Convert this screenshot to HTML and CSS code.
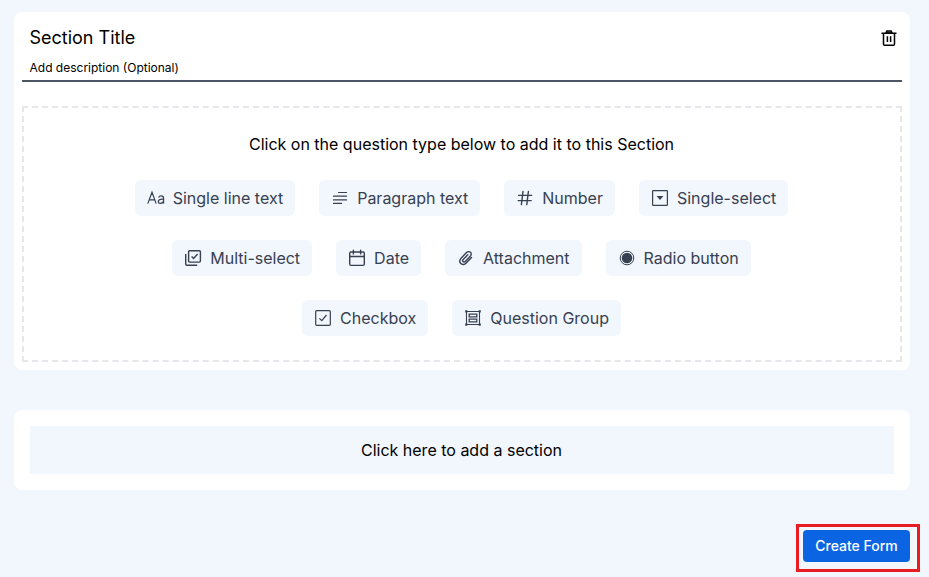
FILE: index.html
```html
<!DOCTYPE html>
<html lang="en">
<head>
  <meta charset="UTF-8">
  <meta name="viewport" content="width=device-width, initial-scale=1.0">
  <title>Create Form</title>
  <link rel="stylesheet" href="styles.css">
</head>
<body>
  <main class="form-builder">
    <section class="card section-card">
      <header class="section-header">
        <div class="section-info">
          <div class="section-title">Section Title</div>
          <div class="section-description">Add description (Optional)</div>
        </div>
        <button class="delete-button" aria-label="Delete section">
          <svg width="18" height="18" viewBox="0 0 18 18" fill="none" stroke="#000" stroke-width="1.5">
            <path d="M6 4l.8-1.9h4.4L12 4z" fill="#aaa"/>
            <path d="M3.5 4.2v11.1q0 1 1 1h9q1 0 1-1V4.2M1.5 4.2h15M7.4 7.3v5.6M10.6 7.3v5.6"/>
          </svg>
        </button>
      </header>

      <div class="question-area">
        <p class="question-hint">Click on the question type below to add it to this Section</p>
        <div class="question-types">
          <button class="type-button">
            <svg class="icon" viewBox="0 0 18 18" fill="none" stroke="currentColor" stroke-width="1.2">
              <path d="M.8 14.6 5 3.2l4.2 11.4M2.3 10.8h5.4M11.6 8.4q.7-1.6 2.6-1.6 2.4 0 2.4 2.5v5.3M16.6 9.9l-2.8.4q-2.5.4-2.5 2.1 0 1.9 2.2 1.9 3.1 0 3.1-3"/>
            </svg>
            Single line text
          </button>
          <button class="type-button">
            <svg class="icon" viewBox="0 0 18 18" fill="none" stroke="currentColor" stroke-width="1.2" stroke-linecap="round">
              <path d="M7.5 3.5h8M2.5 7.2h13M2.5 10.9h13M2.5 14.4h8"/>
            </svg>
            Paragraph text
          </button>
          <button class="type-button">
            <svg class="icon" viewBox="0 0 18 18" fill="none" stroke="currentColor" stroke-width="1.4" stroke-linecap="round">
              <path d="M7 2.4 5.4 15.6M12.4 2.4l-1.6 13.2M2.6 6.4h13M2.2 11.6h13"/>
            </svg>
            Number
          </button>
          <button class="type-button">
            <svg class="icon" viewBox="0 0 18 18" fill="none" stroke="currentColor" stroke-width="1.2">
              <rect x="1.6" y="1.6" width="14.8" height="14.8" rx=".6"/>
              <path d="M5.6 7.1h6.8L9 11z" fill="currentColor" stroke="none"/>
            </svg>
            Single-select
          </button>
          <button class="type-button">
            <svg class="icon" viewBox="0 0 18 18" fill="none" stroke="currentColor" stroke-width="1.4">
              <rect x="4.6" y="1.7" width="11.8" height="11.4" rx="1"/>
              <path d="M1.7 5v10q0 1.2 1.2 1.2h10.3M7.6 7.4l2 2.1 4-4.5"/>
            </svg>
            Multi-select
          </button>
          <button class="type-button">
            <svg class="icon" viewBox="0 0 18 18" fill="none" stroke="currentColor" stroke-width="1.4" stroke-linecap="round">
              <rect x="1.7" y="3" width="14.6" height="13.4" rx="1.3"/>
              <path d="M1.7 7.5h14.6M5.4 1.2v3.7M12.6 1.2v3.7"/>
            </svg>
            Date
          </button>
          <button class="type-button">
            <svg class="icon" viewBox="0 0 18 18" fill="none" stroke="currentColor" stroke-width="1.4" stroke-linecap="round">
              <path d="M14.5 8.4 9.2 14c-1.7 1.8-4 2-5.4.6-1.5-1.5-1.2-3.8.5-5.6l5.2-5.4c1.2-1.2 3-1.4 4-.3 1.1 1 .9 2.7-.3 4l-5 5.1c-.7.7-1.6.8-2.2.2s-.5-1.5.2-2.2l4.6-4.7"/>
            </svg>
            Attachment
          </button>
          <button class="type-button">
            <svg class="icon" viewBox="0 0 18 18">
              <circle cx="9" cy="9" r="6.8" fill="none" stroke="currentColor"/>
              <circle cx="9" cy="9" r="5.3" fill="currentColor"/>
            </svg>
            Radio button
          </button>
          <button class="type-button">
            <svg class="icon" viewBox="0 0 18 18" fill="none" stroke="currentColor" stroke-width="1.2">
              <rect x="1.7" y="1.7" width="14.6" height="14.6" rx="1"/>
              <path d="m5.4 9.3 2.4 2.4 4.7-5.7"/>
            </svg>
            Checkbox
          </button>
          <button class="type-button">
            <svg class="icon" viewBox="0 0 18 18" fill="none" stroke="currentColor" stroke-width="1.1">
              <path d="M2.5 2.5h13v13h-13z"/>
              <path d="M5.2 5.2h7.6v2.6H5.2zM5.2 10.2h7.6v2.6H5.2z" stroke-width="1.3"/>
              <path d="M1.2 1.2h2.2v2.2H1.2zM14.6 1.2h2.2v2.2h-2.2zM1.2 14.6h2.2v2.2H1.2zM14.6 14.6h2.2v2.2h-2.2z" fill="currentColor" stroke="none"/>
            </svg>
            Question Group
          </button>
        </div>
      </div>
    </section>

    <section class="card add-card">
      <button class="add-section">Click here to add a section</button>
    </section>

    <footer class="form-actions">
      <div class="highlight">
        <button class="create-button">Create Form</button>
      </div>
    </footer>
  </main>
</body>
</html>
```
FILE: styles.css
```css
* {
  box-sizing: border-box;
}

body {
  margin: 0;
  min-height: 100vh;
  background: #f2f6fd;
  color: #000;
  font-family: Inter, "Liberation Sans", sans-serif;
  font-size: 16px;
  line-height: 24px;
  overflow: hidden;
}

button {
  margin: 0;
  padding: 0;
  border: 0;
  background: none;
  color: inherit;
  font: inherit;
  cursor: pointer;
}

.form-builder {
  display: flex;
  flex-direction: column;
  padding: 12px 19px 0 14px;
}

.card {
  background: #fff;
  border-radius: 8px;
}

.section-card {
  height: 358px;
  padding: 8px;
}

.section-header {
  display: flex;
  justify-content: space-between;
  height: 62px;
  padding: 4px 4px 0 7.5px;
  border-bottom: 2px solid #4b5563;
}

.section-title {
  font-size: 18px;
  line-height: 28px;
}

.section-description {
  margin-top: 8px;
  font-size: 12px;
  line-height: 16px;
}

.delete-button {
  display: flex;
  width: 18px;
  height: 18px;
  margin-top: 5px;
}

.question-area {
  height: 256px;
  margin-top: 24px;
  padding: 24px 97px 0 96px;
  border: 2px dashed #e5e7eb;
}

.question-hint {
  margin: 0 0 24px;
  text-align: center;
}

.question-types {
  display: flex;
  flex-wrap: wrap;
  justify-content: center;
  gap: 24px;
}

.type-button {
  display: flex;
  align-items: center;
  gap: 8px;
  height: 36px;
  padding: 0 12px;
  border-radius: 6px;
  background: #f2f6fd;
  color: #374151;
}

.icon {
  flex: none;
  width: 18px;
  height: 18px;
}

.add-card {
  display: flex;
  margin-top: 40px;
  padding: 16px;
}

.add-section {
  flex: 1;
  height: 48px;
  padding-right: 1px;
  background: #f2f6fd;
}

.form-actions {
  display: flex;
  justify-content: flex-end;
  margin: 34px -10px 0 0;
}

.highlight {
  padding: 3px 7px 7px 4px;
  border: 3px solid #e91c24;
}

.create-button {
  width: 107px;
  height: 32px;
  border-radius: 4px;
  background: #0b65e3;
  color: #fff;
  font-size: 14px;
  font-weight: 500;
}
```
